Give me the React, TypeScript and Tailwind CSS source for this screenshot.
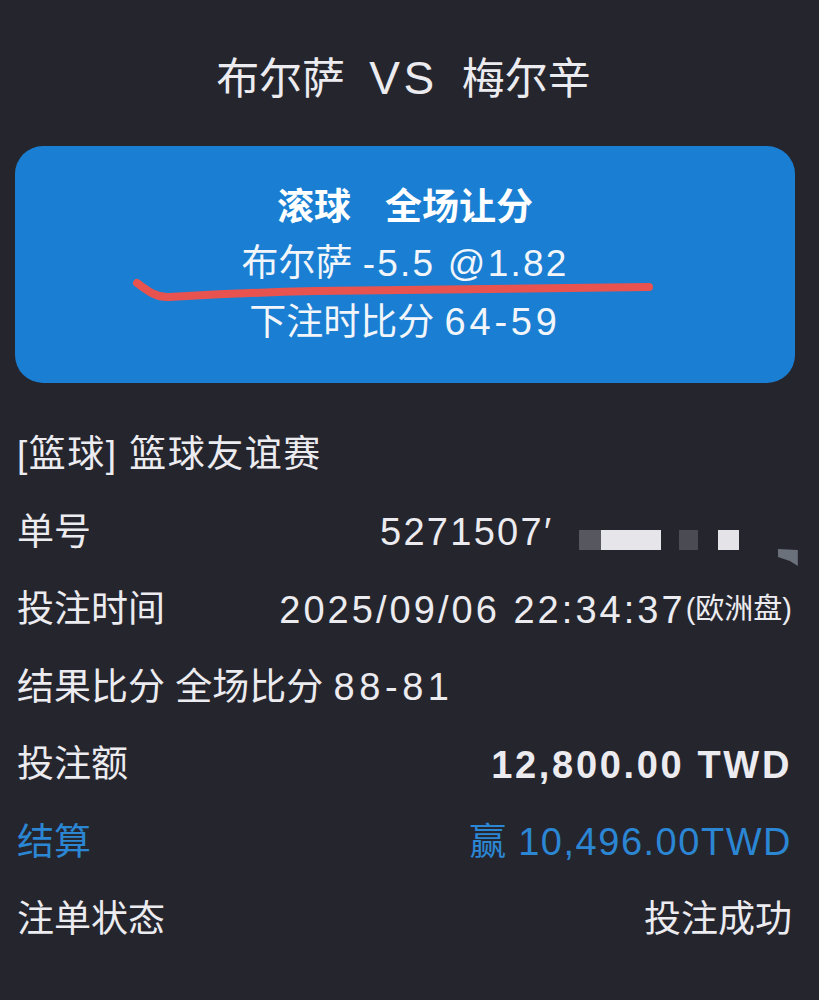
import React from 'react';

// 注单详情：深色背景，蓝色卡片 + 明细行。

const FONT = { fontFamily: '"Liberation Sans", "Noto Sans CJK SC", sans-serif' };

const Num: React.FC<{ children: React.ReactNode; className?: string; size?: string; tracking?: string }> = ({
  children,
  className = '',
  size = 'text-[38px]',
  tracking = 'tracking-[0.08em]',
}) => <span className={`${size} ${tracking} ${className}`}>{children}</span>;

const Row: React.FC<{ label: React.ReactNode; value?: React.ReactNode; labelClass?: string; valueClass?: string }> = ({
  label,
  value,
  labelClass = 'text-[#ececf0]',
  valueClass = 'text-[#ececf0]',
}) => (
  <div className="h-[77.5px] flex items-center justify-between pl-[17px] pr-[27px]">
    <span className={`text-[37px] leading-none whitespace-nowrap ${labelClass}`}>{label}</span>
    {value && <span className={`text-[37px] leading-none whitespace-nowrap flex items-center ${valueClass}`}>{value}</span>}
  </div>
);

export default function App() {
  return (
    <div className="w-[819px] h-[1000px] bg-[#25252e] overflow-hidden" style={FONT}>
      {/* 标题 */}
      <div className="h-[146px] pt-[54px] pr-[12px] text-center text-[#ececf0] text-[43px] leading-[48px] whitespace-nowrap">
        布尔萨<span className="inline-block mx-[24px] text-[46px] tracking-[0.08em]">VS</span>梅尔辛
      </div>

      {/* 蓝色卡片 */}
      <div className="relative ml-[15px] w-[780px] h-[237px] rounded-[28px] bg-[#1a7fd2] pt-[40px] text-center text-white">
        <div className="h-[44px] leading-[44px] text-[37px] font-bold">
          滚球<span className="ml-[34px]">全场让分</span>
        </div>
        <div className="mt-[6px] leading-[56px] text-[37px] text-[#f2f6fb]">
          布尔萨 <Num size="text-[37px]" tracking="tracking-[0.06em]">-5.5 @1.82</Num>
        </div>
        <div className="mt-[2px] leading-[56px] text-[37px] text-[#f2f6fb]">
          下注时比分 <Num tracking="tracking-[0.1em]">64-59</Num>
        </div>
        {/* 红色划线 */}
        <svg className="absolute left-0 top-0" width="780" height="237" viewBox="0 0 780 237">
          <path
            d="M122 137 C 132 144, 140 151, 152 151 C 190 149, 220 147, 300 145 C 420 143, 540 142, 634 141"
            stroke="#e9534f"
            strokeWidth="8"
            fill="none"
            strokeLinecap="round"
          />
        </svg>
      </div>

      {/* 明细 */}
      <div className="mt-[33px]">
        <Row label={<span className="tracking-[0.04em]">[篮球] 篮球友谊赛</span>} />
        <Row
          label="单号"
          value={
            <span className="flex items-center w-[418px]">
              <Num tracking="tracking-[0.06em]">5271507′</Num>
              <span className="ml-[26px] mt-[16px] w-[22px] h-[20px] bg-[#56575f]" />
              <span className="mt-[16px] w-[60px] h-[20px] bg-[#e6e6ea]" />
              <span className="ml-[18px] mt-[16px] w-[20px] h-[20px] bg-[#4b4b53]" />
              <span className="ml-[20px] mt-[16px] w-[21px] h-[20px] bg-[#e3e3e8]" />
              <svg className="ml-[39px] mt-[52px]" width="20" height="18" viewBox="0 0 20 18">
                <polygon points="0,0 20,1 20,17 12,12 0,8" fill="#6b717b" />
              </svg>
            </span>
          }
          valueClass="text-[#ececf0] -mr-[6px]"
        />
        <Row
          label="投注时间"
          value={
            <>
              <Num>2025/09/06 22:34:37</Num>
              <span className="text-[29px]">(欧洲盘)</span>
            </>
          }
        />
        <Row
          label={
            <>
              结果比分 全场比分 <Num tracking="tracking-[0.12em]">88-81</Num>
            </>
          }
        />
        <Row label="投注额" value={<Num className="font-bold" tracking="tracking-[0.07em]">12,800.00 TWD</Num>} />
        <Row
          label="结算"
          labelClass="text-[#2b86d3]"
          value={
            <>
              赢<Num className="ml-[12px]" tracking="tracking-[0.04em]">10,496.00TWD</Num>
            </>
          }
          valueClass="text-[#2b86d3]"
        />
        <Row label="注单状态" value="投注成功" />
      </div>
    </div>
  );
}
